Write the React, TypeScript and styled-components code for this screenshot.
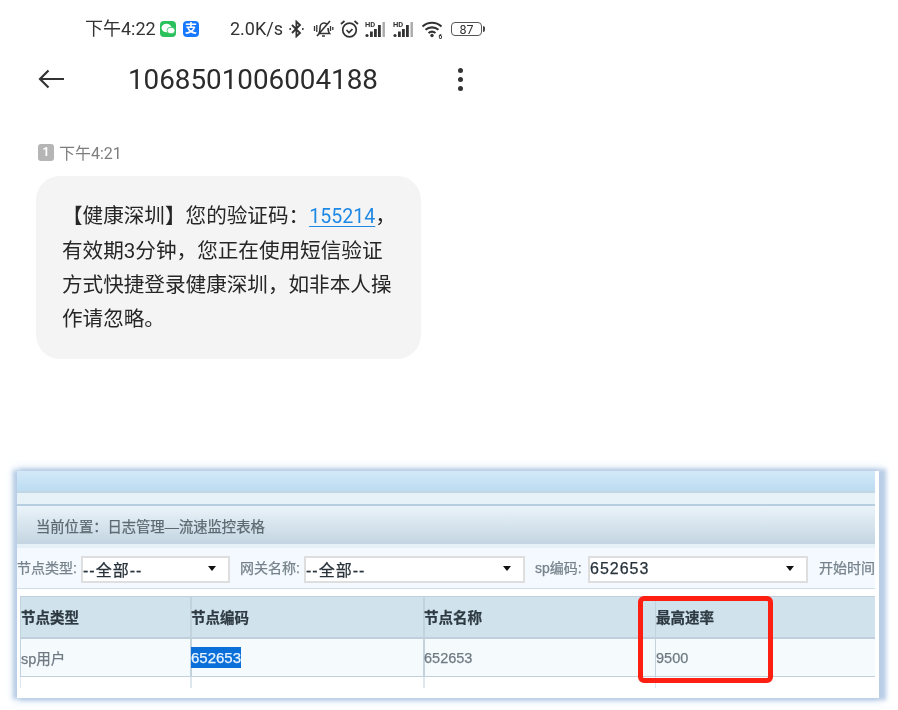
import React from "react";
import styled, { createGlobalStyle } from "styled-components";

const Global = createGlobalStyle`
  html, body { margin: 0; padding: 0; background: #fff; }
  #root { width: 898px; height: 710px; overflow: hidden; }
`;

const CJK = `"Roboto", "Noto Sans CJK SC", sans-serif`;
const OLD = `"Liberation Sans", "Noto Sans CJK SC", sans-serif`;

const Page = styled.div`
  width: 898px;
  height: 710px;
  display: flex;
  flex-direction: column;
  background: #fff;
  font-family: ${CJK};
`;

const Phone = styled.section`
  width: 500px;
  display: flex;
  flex-direction: column;
`;

const StatusBar = styled.div`
  height: 22px;
  margin-top: 18px;
  padding-left: 85px;
  display: flex;
  align-items: center;
  color: #333;
  font-size: 18px;
  filter: blur(0.3px);
`;

const Clock = styled.span`
  width: 75px;
  padding-bottom: 4px;
  white-space: nowrap;
`;

const AppBadge = styled.span<{ $bg: string; $gap: number }>`
  width: 16px;
  height: 16px;
  margin-right: ${(p) => p.$gap}px;
  border-radius: 4px;
  background: ${(p) => p.$bg};
  display: flex;
  align-items: center;
  justify-content: center;
  color: #fff;
  font-size: 12px;
  line-height: 16px;
  font-weight: 700;
`;

const Speed = styled.span`
  width: 59px;
  padding-bottom: 2px;
  white-space: nowrap;
`;

const StatusIcon = styled.svg<{ $gap: number }>`
  flex: none;
  margin-right: ${(p) => p.$gap}px;
  display: block;
`;

const Battery = styled.span`
  position: relative;
  width: 29px;
  height: 12px;
  border: 1px solid #555;
  border-radius: 4px;
  display: flex;
  align-items: center;
  justify-content: center;
  font-size: 12.5px;
  color: #333;
  margin-left: 7px;
  &::after {
    content: "";
    position: absolute;
    right: -4px;
    top: 3px;
    width: 2px;
    height: 6px;
    border-radius: 0 2px 2px 0;
    background: #444;
  }
`;

const TitleRow = styled.header`
  height: 38px;
  margin-top: 20px;
  padding-left: 38px;
  display: flex;
  align-items: center;
`;

const Back = styled.svg`
  display: block;
  margin-right: 64px;
`;

const Title = styled.h1`
  margin: 0;
  width: 330px;
  font-size: 27.8px;
  font-weight: 400;
  color: #2b2b2b;
  filter: blur(0.25px);
`;

const Kebab = styled.span`
  width: 5px;
  display: flex;
  flex-direction: column;
  gap: 4px;
  i {
    width: 5px;
    height: 5px;
    border-radius: 50%;
    background: #333;
  }
`;

const Stamp = styled.div`
  margin: 44px 0 0 38px;
  height: 20px;
  display: flex;
  align-items: center;
  gap: 5px;
  color: #7d7d7d;
  font-size: 16px;
  filter: blur(0.25px);
`;

const SimBadge = styled.span`
  width: 16px;
  height: 17px;
  border-radius: 3px;
  background: #b5b5b5;
  color: #fff;
  font-size: 12px;
  font-weight: 700;
  display: flex;
  align-items: center;
  justify-content: center;
`;

const Bubble = styled.div`
  width: 333px;
  height: 151px;
  margin: 14px 0 0 36px;
  padding: 23px 26px 9px 26px;
  border-radius: 24px;
  background: #f4f4f4;
  color: #262626;
  font-size: 20.6px;
  line-height: 34px;
  box-sizing: content-box;
`;

const Line = styled.div`
  white-space: nowrap;
  filter: blur(0.25px);
`;

const Code = styled.span`
  color: #1e88e5;
  font-size: 19.6px;
  text-decoration: underline;
  text-underline-offset: 3px;
  text-decoration-thickness: 1px;
`;

const PanelWrap = styled.section`
  position: relative;
  width: 862px;
  height: 227px;
  margin: 112px 0 0 17px;
  background: #fff;
  box-shadow: -3px 0 4px 1px #b9cde6, 5px 0 4px 2px #b9cde6, 0 0 9px 4px #e6eef8;
`;

const Panel = styled.div`
  width: 858px;
  height: 227px;
  overflow: hidden;
  display: flex;
  flex-direction: column;
  font-family: ${OLD};
  filter: blur(0.6px);
  -webkit-text-stroke: 0.25px currentColor;
`;

const TopBand = styled.div`
  flex: none;
  height: 20px;
  background: linear-gradient(#d3e9f8, #bcdcf1);
  border-bottom: 2px solid #c3d6e4;
`;

const SubBand = styled.div`
  flex: none;
  height: 11px;
  background: #e7f1f8;
  border-bottom: 2px solid #b5cfe0;
`;

const Crumb = styled.div`
  flex: none;
  height: 38px;
  padding: 0 0 0 19px;
  display: flex;
  align-items: center;
  background: linear-gradient(#eaf3f9, #c3d5e1);
  border-bottom: 4px solid #e6f0f7;
  color: #5d6a72;
  font-size: 14.3px;
  white-space: nowrap;
`;

const Filters = styled.div`
  flex: none;
  height: 37px;
  padding-top: 3px;
  display: flex;
  align-items: center;
  background: #f3f9fe;
  border-bottom: 1px solid #cfdfe8;
  white-space: nowrap;
`;

const Label = styled.span<{ $width: number }>`
  flex: none;
  width: ${(p) => p.$width}px;
  padding-bottom: 6px;
  color: #77838b;
  font-size: 14px;
`;

const Select = styled.div<{ $width: number; $gap: number }>`
  flex: none;
  box-sizing: border-box;
  width: ${(p) => p.$width}px;
  height: 27px;
  margin-right: ${(p) => p.$gap}px;
  padding: 0 0 2px 0;
  display: flex;
  align-items: center;
  justify-content: space-between;
  background: #fff;
  border: 2px solid #dedede;
  color: #27323a;
  font-size: 16px;
  letter-spacing: 1px;
  &::after {
    content: "";
    margin-right: 12px;
    border: 4px solid transparent;
    border-top: 5px solid #111;
    border-bottom: 0;
  }
`;

const Table = styled.div`
  flex: none;
  margin: 7px 0 0 3px;
  height: 92px;
  display: grid;
  grid-template-columns: 170px 233px 232px 220px;
  grid-template-rows: 43px 38px 11px;
`;

const Cell = styled.div<{ $kind: "head" | "body" | "foot"; $rule: number }>`
  box-sizing: border-box;
  padding: 0 0 ${(p) => (p.$kind === "head" ? 2 : 0)}px 1px;
  display: flex;
  align-items: center;
  box-shadow: inset ${(p) => p.$rule}px 0 0 ${(p) => (p.$kind === "foot" ? "#dde7ee" : "#c3d3de")};
  border-top: ${(p) => (p.$kind === "head" ? "1px solid #bfcfdb" : "none")};
  border-bottom: ${(p) =>
    p.$kind === "head" ? "2px solid #bfd0dc" : p.$kind === "body" ? "1px solid #c3d1dc" : "none"};
  background: ${(p) =>
    p.$kind === "head" ? "#d0e2ec" : p.$kind === "body" ? "#f5fafd" : "#fff"};
  color: ${(p) => (p.$kind === "head" ? "#2e3a42" : "#6f7a82")};
  font-size: 14.5px;
  font-weight: ${(p) => (p.$kind === "head" ? 700 : 400)};
`;

const Selected = styled.span`
  background: #0a6fd8;
  color: #e8f4ff;
  padding: 2px 0;
  width: 50px;
  font-size: 15px;
  line-height: 17px;
`;

const Highlight = styled.div`
  position: absolute;
  left: 621px;
  top: 125px;
  width: 135px;
  height: 87px;
  box-sizing: border-box;
  border: 5px solid #fd2012;
  border-radius: 6px;
`;

const Wechat = () => (
  <svg width="14" height="12" viewBox="0 0 14 12">
    <ellipse cx="5.5" cy="5" rx="5" ry="4.2" fill="#fff" />
    <ellipse cx="10" cy="7.5" rx="4" ry="3.3" fill="#fff" stroke="#2ac05c" strokeWidth="0.8" />
  </svg>
);

const HdSignal = ({ gap }: { gap: number }) => (
  <StatusIcon $gap={gap} width="22" height="18" viewBox="0 0 22 18">
    <text x="0" y="6.5" fontSize="7.5" fontWeight="700" fill="#333" fontFamily="Roboto, sans-serif">HD</text>
    <circle cx="2" cy="15.5" r="1.6" fill="#333" />
    <rect x="5" y="11.5" width="2.8" height="5.5" fill="#333" />
    <rect x="9" y="9" width="2.8" height="8" fill="#333" />
    <rect x="13" y="5" width="2.8" height="12" fill="#333" />
    <rect x="17.5" y="2" width="2.4" height="15" fill="#aaa" />
  </StatusIcon>
);

const columns = ["节点类型", "节点编码", "节点名称", "最高速率"];
const rules = [1, 2, 2, 1];

export default function App() {
  return (
    <Page>
      <Global />
      <Phone>
        <StatusBar>
          <Clock>下午4:22</Clock>
          <AppBadge $bg="#2ac05c" $gap={7}><Wechat /></AppBadge>
          <AppBadge $bg="#1677ff" $gap={31}>支</AppBadge>
          <Speed>2.0K/s</Speed>
          <StatusIcon $gap={9} width="15" height="18" viewBox="0 0 15 18" fill="none" stroke="#333" strokeWidth="1.8">
            <path d="M3 5l8 8-3.6 3.4V1.6L11 5l-8 8" />
            <circle cx="1.2" cy="9" r="1" fill="#333" stroke="none" />
            <circle cx="13.8" cy="9" r="1" fill="#333" stroke="none" />
          </StatusIcon>
          <StatusIcon $gap={6} width="21" height="20" viewBox="0 0 21 20" fill="none" stroke="#333" strokeWidth="1.6">
            <path d="M6 14.5c1-1.5 1-3 1-5.5 0-3 1.5-5 4-5 1.5 0 2.5.6 3 1.5M15 9c0 2.5.3 4 1.5 5.5H6M9 17h3" />
            <path d="M4 17L17 2" />
            <path d="M1.5 7v5M3.8 6v7M17.5 7v5M19.8 8v3" strokeWidth="1.3" />
          </StatusIcon>
          <StatusIcon $gap={6} width="19" height="20" viewBox="0 0 19 20" fill="none" stroke="#333" strokeWidth="1.7">
            <circle cx="9.5" cy="11" r="6.8" />
            <path d="M6.5 11l2.5 2.5 3.5-3.5" />
            <path d="M1 5l3.5-3M18 5l-3.5-3" />
          </StatusIcon>
          <HdSignal gap={6} />
          <HdSignal gap={6} />
          <StatusIcon $gap={0} width="23" height="20" viewBox="0 0 23 20" fill="none" stroke="#333" strokeWidth="2.1">
            <path d="M1.5 7.5c5.5-5 13.5-5 19 0M4.5 10.8c3.8-3.3 9.2-3.3 13 0M7.5 14c2-1.6 5-1.6 7 0" />
            <circle cx="11" cy="16.5" r="1.7" fill="#333" stroke="none" />
            <text x="17.5" y="19.5" fontSize="6.5" fontWeight="700" fill="#333" stroke="none" fontFamily="Roboto, sans-serif">6</text>
          </StatusIcon>
          <Battery>87</Battery>
        </StatusBar>

        <TitleRow>
          <Back width="26" height="20" viewBox="0 0 26 20" fill="none" stroke="#333" strokeWidth="2.2">
            <path d="M26 10H2M10.5 1.5L2 10l8.5 8.5" />
          </Back>
          <Title>1068501006004188</Title>
          <Kebab><i /><i /><i /></Kebab>
        </TitleRow>

        <Stamp>
          <SimBadge>1</SimBadge>
          下午4:21
        </Stamp>
        <Bubble>
          <Line>【健康深圳】您的验证码：<Code>155214</Code>，</Line>
          <Line>有效期3分钟，您正在使用短信验证</Line>
          <Line>方式快捷登录健康深圳，如非本人操</Line>
          <Line>作请忽略。</Line>
        </Bubble>
      </Phone>

      <PanelWrap>
        <Panel>
          <TopBand />
          <SubBand />
          <Crumb>当前位置：日志管理—流速监控表格</Crumb>
          <Filters>
            <Label $width={64}>节点类型:</Label>
            <Select $width={149} $gap={10}>--全部--</Select>
            <Label $width={64}>网关名称:</Label>
            <Select $width={221} $gap={10}>--全部--</Select>
            <Label $width={53}>sp编码:</Label>
            <Select $width={220} $gap={11}>652653</Select>
            <Label $width={56}>开始时间</Label>
          </Filters>
          <Table>
            {columns.map((c, i) => (
              <Cell key={c} $kind="head" $rule={rules[i]}>{c}</Cell>
            ))}
            <Cell $kind="body" $rule={rules[0]}>sp用户</Cell>
            <Cell $kind="body" $rule={rules[1]}><Selected>652653</Selected></Cell>
            <Cell $kind="body" $rule={rules[2]}>652653</Cell>
            <Cell $kind="body" $rule={rules[3]}>9500</Cell>
            {columns.map((c, i) => (
              <Cell key={c} $kind="foot" $rule={rules[i]} />
            ))}
          </Table>
        </Panel>
        <Highlight />
      </PanelWrap>
    </Page>
  );
}
